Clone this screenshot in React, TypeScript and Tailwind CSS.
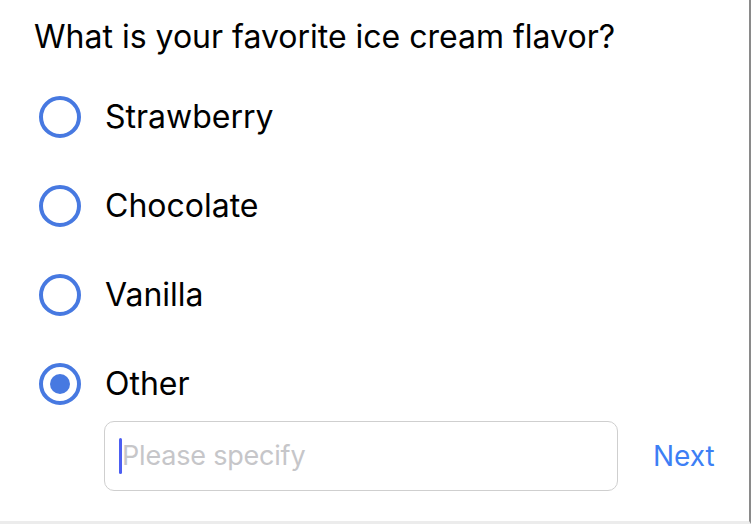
import React from "react";

function Radio({ checked }: { checked?: boolean }) {
  return (
    <div className="w-[42px] h-[42px] rounded-full border-[4px] border-[#4779e1] flex items-center justify-center shrink-0">
      {checked && <div className="w-[20px] h-[20px] rounded-full bg-[#4779e1]" />}
    </div>
  );
}

export default function App() {
  const options = ["Strawberry", "Chocolate", "Vanilla", "Other"];
  return (
    <div className="w-[751px] h-[524px] bg-white flex" style={{ fontFamily: "Inter, 'Noto Sans', sans-serif" }}>
      <div className="flex-1 flex flex-col border-r-2 border-r-[#8a8a8a] border-b-[3px] border-b-[#ececec]">
        <div className="pl-[34px] pt-[15px] text-[32px] leading-[44px] text-black">
          What is your favorite ice cream flavor?
        </div>
        <div className="flex flex-col pl-[39px] mt-[37px] gap-[47px]">
          {options.map((o) => (
            <div key={o} className="flex items-center gap-[24px] h-[42px]">
              <Radio checked={o === "Other"} />
              <span className="text-[32px] text-black">{o}</span>
            </div>
          ))}
        </div>
        <div className="flex items-center mt-[16px] pl-[104px]">
          <div className="w-[514px] h-[70px] rounded-[10px] border border-[#cfcfcf] flex items-center pl-[14px]">
            <div className="w-[3px] h-[36px] rounded-full bg-[#4c5ef2]" />
            <span className="text-[27px] text-[#c6c6c9] tracking-[-0.2px]">Please specify</span>
          </div>
          <span className="ml-[35px] text-[28px] text-[#3d7ff5]">Next</span>
        </div>
      </div>
    </div>
  );
}
